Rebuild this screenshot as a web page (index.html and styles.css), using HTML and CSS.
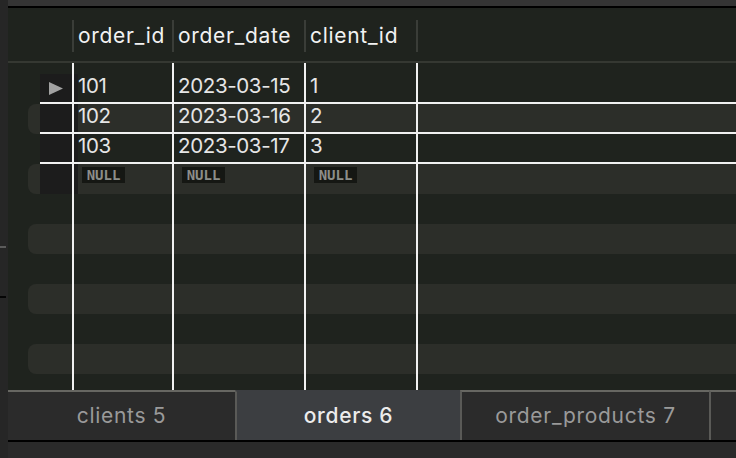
FILE: index.html
```html
<!DOCTYPE html>
<html>
<head>
<meta charset="utf-8">
<link rel="stylesheet" href="styles.css">
</head>
<body>
<div class="app">
  <div class="side"><span class="mark mark-gray"></span><span class="mark mark-black"></span></div>
  <div class="main">
    <div class="topbar"></div>
    <div class="grid">
      <div class="head">
        <div class="hgap"></div>
        <div class="hcell c1">order_id</div>
        <div class="hcell c2">order_date</div>
        <div class="hcell c3">client_id</div>
        <div class="hcell c4"></div>
      </div>
      <div class="body">
        <div class="row spacer"><div class="indent"></div><div class="inner"><div class="rh"></div><div class="cell c1"></div><div class="cell c2"></div><div class="cell c3"></div><div class="cell c4"></div></div></div>
        <div class="row data"><div class="indent"></div><div class="inner lined"><div class="rh head-cell"><svg class="tri" width="14" height="13" viewBox="0 0 14 13"><polygon points="0,0 14,6.5 0,13" fill="#a2a2a2"/></svg></div><div class="cell c1 ext">101</div><div class="cell c2">2023-03-15</div><div class="cell c3">1</div><div class="cell c4"></div></div></div>
        <div class="row data light"><div class="indent"></div><div class="inner lined"><div class="rh head-cell"></div><div class="cell c1 ext">102</div><div class="cell c2">2023-03-16</div><div class="cell c3">2</div><div class="cell c4"></div></div></div>
        <div class="row data"><div class="indent"></div><div class="inner lined"><div class="rh head-cell"></div><div class="cell c1 ext">103</div><div class="cell c2">2023-03-17</div><div class="cell c3">3</div><div class="cell c4"></div></div></div>
        <div class="row data light"><div class="indent"></div><div class="inner"><div class="rh head-cell"></div><div class="cell c1 ext"><span class="null">NULL</span></div><div class="cell c2"><span class="null">NULL</span></div><div class="cell c3"><span class="null">NULL</span></div><div class="cell c4"></div></div></div>
        <div class="row"><div class="indent"></div><div class="inner"><div class="rh"></div><div class="cell c1"></div><div class="cell c2"></div><div class="cell c3"></div><div class="cell c4"></div></div></div>
        <div class="row light"><div class="indent"></div><div class="inner"><div class="rh"></div><div class="cell c1"></div><div class="cell c2"></div><div class="cell c3"></div><div class="cell c4"></div></div></div>
        <div class="row"><div class="indent"></div><div class="inner"><div class="rh"></div><div class="cell c1"></div><div class="cell c2"></div><div class="cell c3"></div><div class="cell c4"></div></div></div>
        <div class="row light"><div class="indent"></div><div class="inner"><div class="rh"></div><div class="cell c1"></div><div class="cell c2"></div><div class="cell c3"></div><div class="cell c4"></div></div></div>
        <div class="row"><div class="indent"></div><div class="inner"><div class="rh"></div><div class="cell c1"></div><div class="cell c2"></div><div class="cell c3"></div><div class="cell c4"></div></div></div>
        <div class="row light"><div class="indent"></div><div class="inner"><div class="rh"></div><div class="cell c1"></div><div class="cell c2"></div><div class="cell c3"></div><div class="cell c4"></div></div></div>
        <div class="row"><div class="indent"></div><div class="inner"><div class="rh"></div><div class="cell c1"></div><div class="cell c2"></div><div class="cell c3"></div><div class="cell c4"></div></div></div>
      </div>
    </div>
    <div class="tabs">
      <div class="tab t1">clients 5</div>
      <div class="tab t2 active">orders 6</div>
      <div class="tab t3">order_products 7</div>
      <div class="tab t4"></div>
    </div>
    <div class="footer"></div>
  </div>
</div>
</body>
</html>
```

FILE: styles.css
```css
* { box-sizing: border-box; }
html, body { margin: 0; padding: 0; }
body {
  width: 736px;
  height: 458px;
  overflow: hidden;
  background: #262626;
  font-family: Inter, "Liberation Sans", sans-serif;
}
.app { display: flex; width: 736px; height: 458px; }
.side {
  width: 8px;
  flex: none;
  background: #262626;
  display: flex;
  flex-direction: column;
}
.mark { display: block; width: 6px; height: 2px; }
.mark-gray { margin-top: 246px; background: #5b5b5b; }
.mark-black { margin-top: 48px; background: #050505; }
.main { flex: 1; display: flex; flex-direction: column; min-width: 0; }
.topbar { height: 8px; background: #343434; border-bottom: 2px solid #000; flex: none; }
.grid {
  height: 382px;
  flex: none;
  background: #1f231e;
  overflow: hidden;
  display: flex;
  flex-direction: column;
}
.head {
  height: 55px;
  flex: none;
  display: flex;
  border-bottom: 2px solid #353832;
}
.hgap { width: 64px; flex: none; }
.hcell {
  margin-top: 12px;
  height: 32px;
  border-left: 2px solid #3a3d38;
  padding-left: 4px;
  line-height: 32px;
  font-size: 21px;
  letter-spacing: 0.7px;
  color: #f2f2f2;
  white-space: nowrap;
  flex: none;
}
.c1 { width: 100px; }
.c2 { width: 132px; }
.c3 { width: 112px; }
.hcell.c4, .cell.c4 { flex: 1; width: auto; }
.body { flex: 1; display: flex; flex-direction: column; overflow: hidden; }
.row {
  height: 30px;
  flex: none;
  display: flex;
  margin-left: 20px;
  border-radius: 8px 0 0 8px;
}
.row.spacer { height: 11px; }
.row.light { background: #2c2e29; }
.indent { width: 12px; flex: none; }
.inner { flex: 1; display: flex; }
.inner.lined { border-bottom: 2px solid #f1f1f1; }
.rh { width: 32px; flex: none; display: flex; align-items: center; padding-left: 9px; }
.rh.head-cell { background: #1c1c1c; }
.tri { display: block; }
.cell {
  flex: none;
  display: flex;
  align-items: flex-start;
  border-left: 2px solid #f1f1f1;
  padding-left: 4px;
  font-size: 20.5px;
  letter-spacing: -0.35px;
  line-height: 24px;
  color: #e6e6e6;
  white-space: nowrap;
}
.cell.ext { background: linear-gradient(to right, #1c1c1c 4px, transparent 4px); }
.null {
  display: block;
  margin: 3px 0 0 4px;
  width: 43px;
  height: 16px;
  background: #151713;
  color: #8c8e89;
  font-family: "DejaVu Sans Mono", "Liberation Mono", monospace;
  font-weight: bold;
  font-size: 14px;
  line-height: 16px;
  text-align: center;
  letter-spacing: 0;
}
.tabs { height: 50px; flex: none; display: flex; }
.tab {
  flex: none;
  height: 50px;
  border-top: 2px solid #676762;
  background: #2b2b2b;
  color: #9a9a9a;
  font-size: 21px;
  letter-spacing: 0.7px;
  line-height: 48px;
  text-align: center;
  white-space: nowrap;
}
.t1 { width: 227px; }
.t2 { width: 225px; border-left: 2px solid #5a5a57; }
.t3 { width: 249px; border-left: 2px solid #5a5a57; }
.t4 { flex: 1; border-left: 2px solid #5a5a57; }
.tab.active {
  background: #3c3e41;
  border-top-color: #3c3e41;
  color: #ececec;
  font-weight: 500;
}
.footer { height: 18px; flex: none; border-top: 2px solid #000; background: #2a2a2a; }
```
